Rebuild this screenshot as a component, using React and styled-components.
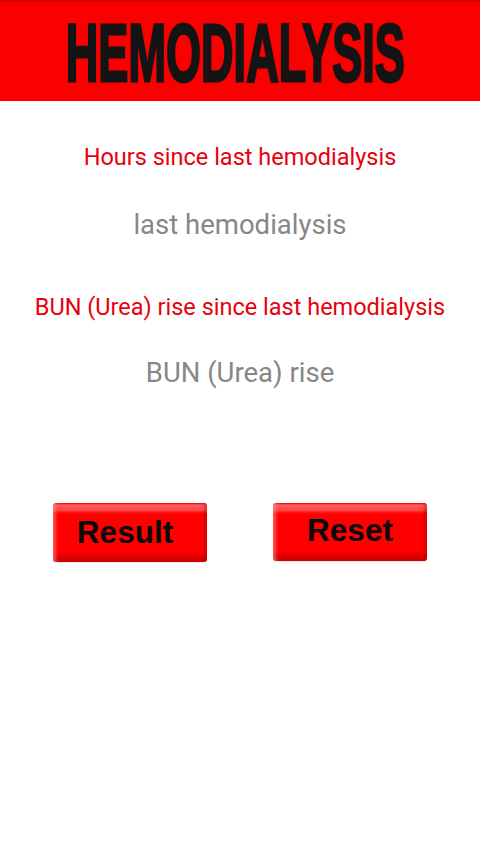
import React from "react";
import styled, { createGlobalStyle } from "styled-components";

const Global = createGlobalStyle`
  html, body { margin: 0; padding: 0; background: #ffffff; }
  body { font-family: Roboto, "Noto Sans", sans-serif; }
`;

const Page = styled.div`
  width: 480px;
  min-height: 854px;
  background: #ffffff;
  display: flex;
  flex-direction: column;
`;

const Header = styled.header`
  height: 101px;
  box-sizing: border-box;
  background: #fb0000;
  border-top: 2px solid #d60000;
  display: flex;
  align-items: center;
  justify-content: center;
  padding-right: 10px;
  overflow: hidden;
`;

const Title = styled.h1`
  margin: 0;
  font-family: "Liberation Sans", Arial, sans-serif;
  font-weight: 700;
  font-size: 82px;
  line-height: 1;
  color: #141414;
  -webkit-text-stroke: 3px #141414;
  transform: scaleX(0.55);
  white-space: nowrap;
  letter-spacing: 0;
  margin-top: 3px;
`;

const Form = styled.main`
  display: flex;
  flex-direction: column;
  align-items: stretch;
  padding-top: 42px;
`;

const Field = styled.div`
  display: flex;
  flex-direction: column;
  align-items: center;
  margin-bottom: ${(p) => p.$gap}px;
`;

const Label = styled.label`
  font-family: Roboto, "Noto Sans", sans-serif;
  font-size: 23.5px;
  line-height: 28px;
  color: #e8000b;
  text-align: center;
  white-space: nowrap;
`;

const Input = styled.input`
  margin-top: ${(p) => p.$top}px;
  width: 440px;
  border: none;
  outline: none;
  background: transparent;
  padding: 0;
  height: 34px;
  font-family: Roboto, "Noto Sans", sans-serif;
  font-size: 27.5px;
  line-height: 34px;
  text-align: center;
  color: #333;
  &::placeholder {
    color: #878787;
    opacity: 1;
  }
`;

const Buttons = styled.div`
  display: flex;
  justify-content: center;
  gap: 66px;
  margin-top: 113px;
`;

const GlossButton = styled.button`
  width: 154px;
  height: ${(p) => p.$h}px;
  border: none;
  border-radius: 3px;
  padding: 0;
  cursor: pointer;
  font-family: "Liberation Sans", Arial, sans-serif;
  font-weight: 700;
  font-size: 31.5px;
  color: #0a0a0a;
  display: flex;
  align-items: center;
  justify-content: center;
  padding-bottom: ${(p) => p.$pb}px;
  padding-right: ${(p) => p.$pr}px;
  box-sizing: border-box;
  background: linear-gradient(
    to bottom,
    #e80000 0px,
    #ff5c5c 2px,
    #ff4a4a 7px,
    #ff1a1a 9px,
    #ff0000 11px,
    #ff0000 calc(100% - 9px),
    #e60000 calc(100% - 7px),
    #cf0000 100%
  );
  box-shadow:
    inset 7px 0 3px -4px rgba(255, 140, 140, 0.55),
    inset -7px 0 3px -4px rgba(150, 0, 0, 0.35),
    0 1px 1px rgba(0, 0, 0, 0.08);
`;

export default function App() {
  return (
    <Page>
      <Global />
      <Header>
        <Title>HEMODIALYSIS</Title>
      </Header>
      <Form>
        <Field $gap={51}>
          <Label htmlFor="hours">Hours since last hemodialysis</Label>
          <Input id="hours" $top={37} placeholder="last hemodialysis" />
        </Field>
        <Field $gap={0}>
          <Label htmlFor="bun">BUN (Urea) rise since last hemodialysis</Label>
          <Input id="bun" $top={35} placeholder="BUN (Urea) rise" />
        </Field>
        <Buttons>
          <GlossButton $h={59} $pb={0} $pr={10}>Result</GlossButton>
          <GlossButton $h={58} $pb={4} $pr={0}>Reset</GlossButton>
        </Buttons>
      </Form>
    </Page>
  );
}
